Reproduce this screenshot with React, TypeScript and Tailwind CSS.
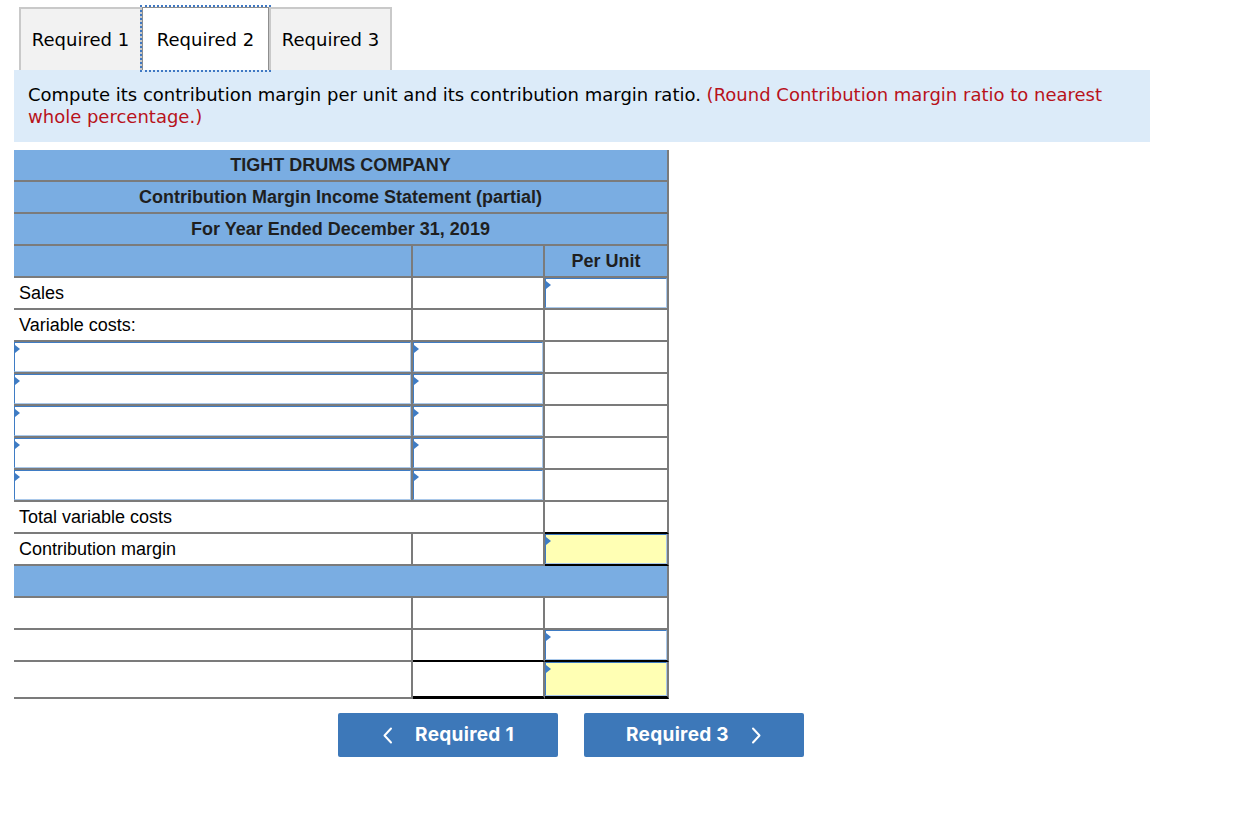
import React from "react";

const verdana = { fontFamily: '"DejaVu Sans", Verdana, sans-serif' };
const arial = { fontFamily: '"Liberation Sans", Arial, sans-serif' };

function Entry({ yellow = false }: { yellow?: boolean }) {
  return (
    <div
      className={`relative h-full w-full border border-[#3f7cc4] border-r-[#a9c8ea] border-b-[#a9c8ea] ${
        yellow ? "bg-[#ffffb4]" : "bg-white"
      }`}
    >
      <span className="absolute left-0 top-[2px] h-0 w-0 border-y-[4px] border-l-[5px] border-y-transparent border-l-[#3f7cc4]" />
    </div>
  );
}

type CellProps = {
  children?: React.ReactNode;
  className?: string;
};

function Cell({ children, className = "" }: CellProps) {
  return <div className={`flex h-[32px] items-center border-b-2 border-r-2 border-[#7b7b7b] ${className}`}>{children}</div>;
}

function Head({ children }: { children?: React.ReactNode }) {
  return (
    <Cell className="col-span-3 justify-center bg-[#7aade2] font-bold text-[#1f1f1f]">
      {children}
    </Cell>
  );
}

export default function App() {
  return (
    <div className="min-h-screen bg-white text-black">
      <div className="ml-[19px] flex pt-[7px]" style={verdana}>
        <div className="flex h-[63px] w-[123px] items-center justify-center border-2 border-b-0 border-[#c9c9c9] bg-[#f2f2f2] text-[18px]">
          Required 1
        </div>
        <div className="flex h-[63px] w-[127px] items-center justify-center border border-b-0 border-[#8e8e8e] bg-white text-[18px] outline-2 outline-dotted outline-[#3f78c3]">
          Required 2
        </div>
        <div className="flex h-[63px] w-[123px] items-center justify-center border-2 border-b-0 border-[#c9c9c9] bg-[#f2f2f2] text-[18px]">
          Required 3
        </div>
      </div>

      <div className="ml-[14px] w-[1136px] bg-[#dcebf9] px-[14px] py-[14px] text-[18px] leading-[22px]" style={verdana}>
        Compute its contribution margin per unit and its contribution margin ratio.{" "}
        <span className="text-[#b8121b]">(Round Contribution margin ratio to nearest whole percentage.)</span>
      </div>

      <div className="ml-[14px] mt-[8px] grid w-[655px] grid-cols-[399px_132px_124px] text-[18px]" style={arial}>
        <Head>TIGHT DRUMS COMPANY</Head>
        <Head>Contribution Margin Income Statement (partial)</Head>
        <Head>For Year Ended December 31, 2019</Head>

        <Cell className="bg-[#7aade2]" />
        <Cell className="bg-[#7aade2]" />
        <Cell className="justify-center bg-[#7aade2] font-bold text-[#1f1f1f]">Per Unit</Cell>

        <Cell className="pl-[5px]">Sales</Cell>
        <Cell />
        <Cell>
          <Entry />
        </Cell>

        <Cell className="pl-[5px]">Variable costs:</Cell>
        <Cell />
        <Cell />

        {[0, 1, 2, 3, 4].map((i) => (
          <React.Fragment key={i}>
            <Cell>
              <Entry />
            </Cell>
            <Cell>
              <Entry />
            </Cell>
            <Cell />
          </React.Fragment>
        ))}

        <Cell className="col-span-2 pl-[5px]">Total variable costs</Cell>
        <Cell className="border-b-black" />

        <Cell className="pl-[5px]">Contribution margin</Cell>
        <Cell />
        <Cell className="border-b-black">
          <Entry yellow />
        </Cell>

        <Cell className="col-span-3 bg-[#7aade2]" />

        <Cell />
        <Cell />
        <Cell />

        <Cell />
        <Cell className="border-b-black" />
        <Cell className="border-b-black">
          <Entry />
        </Cell>

        <Cell className="h-[37px]" />
        <Cell className="h-[37px] border-b-[3px] border-b-black" />
        <Cell className="h-[37px] border-b-[3px] border-b-black">
          <Entry yellow />
        </Cell>
      </div>

      <div className="ml-[338px] mt-[14px] flex gap-[26px]" style={{ fontFamily: "Inter, sans-serif" }}>
        <button className="flex h-[44px] w-[220px] items-center justify-center gap-[22px] rounded-[2px] bg-[#3d78b9] text-[19px] font-bold tracking-[0.3px] text-white">
          <svg width="11" height="17" viewBox="0 0 11 17" fill="none">
            <path d="M9 1.5 L2.5 8.5 L9 15.5" stroke="white" strokeWidth="2" strokeLinecap="round" strokeLinejoin="round" />
          </svg>
          Required 1
        </button>
        <button className="flex h-[44px] w-[220px] items-center justify-center gap-[22px] rounded-[2px] bg-[#3d78b9] text-[19px] font-bold tracking-[0.3px] text-white">
          Required 3
          <svg width="11" height="17" viewBox="0 0 11 17" fill="none">
            <path d="M2 1.5 L8.5 8.5 L2 15.5" stroke="white" strokeWidth="2" strokeLinecap="round" strokeLinejoin="round" />
          </svg>
        </button>
      </div>
    </div>
  );
}
